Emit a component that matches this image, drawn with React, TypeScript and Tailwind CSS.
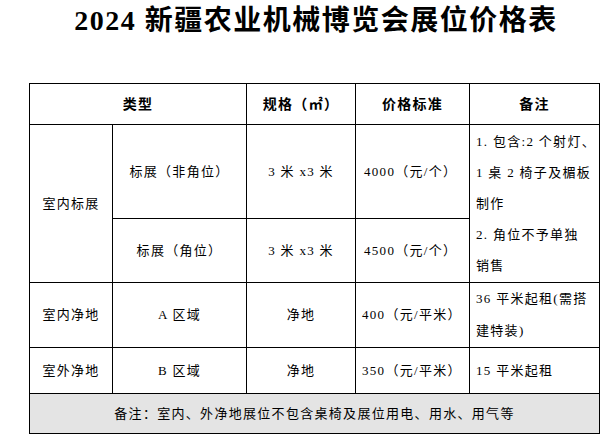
import React from "react";

const F = { fontFamily: '"Liberation Serif", "Noto Sans CJK SC", serif' };

export default function App() {
  const cell = "border border-black text-center align-middle p-0";
  return (
    <div className="w-[616px] h-[447px] bg-white text-black" style={F}>
      <div className="h-[83px] pl-[16px]">
        <div className="pt-[5px] text-center text-[28px] leading-[32px] font-bold tracking-[1.5px]">
          2024 新疆农业机械博览会展位价格表
        </div>
      </div>
      <table className="ml-[29px] w-[570px] table-fixed border-collapse text-[13px] tracking-[1.3px]">
        <colgroup>
          <col className="w-[83px]" />
          <col className="w-[134px]" />
          <col className="w-[109px]" />
          <col className="w-[114px]" />
          <col className="w-[130px]" />
        </colgroup>
        <tbody>
          <tr className="h-[41px] font-bold text-[14px]">
            <td className={cell} colSpan={2}>类型</td>
            <td className={cell}>规格（㎡）</td>
            <td className={cell}>价格标准</td>
            <td className={cell}>备注</td>
          </tr>
          <tr className="h-[94px]">
            <td className={cell} rowSpan={2}>室内标展</td>
            <td className={cell}>标展（非角位）</td>
            <td className={cell}>3 米 x3 米</td>
            <td className={cell + " !text-left pl-[8px]"}>4000（元/个）</td>
            <td className={cell + " !text-left pl-[6px] leading-[31px]"} rowSpan={2}>
              1. 包含:2 个射灯、<br />1 桌 2 椅子及楣板<br />制作<br />2. 角位不予单独<br />销售
            </td>
          </tr>
          <tr className="h-[64px]">
            <td className={cell}>标展（角位）</td>
            <td className={cell}>3 米 x3 米</td>
            <td className={cell + " !text-left pl-[8px]"}>4500（元/个）</td>
          </tr>
          <tr className="h-[63px]">
            <td className={cell}>室内净地</td>
            <td className={cell}>A 区域</td>
            <td className={cell}>净地</td>
            <td className={cell + " !text-left pl-[6px]"}>400（元/平米）</td>
            <td className={cell + " !text-left pl-[6px] leading-[32px]"}>
              36 平米起租(需搭<br />建特装)
            </td>
          </tr>
          <tr className="h-[46px]">
            <td className={cell}>室外净地</td>
            <td className={cell}>B 区域</td>
            <td className={cell}>净地</td>
            <td className={cell + " !text-left pl-[6px]"}>350（元/平米）</td>
            <td className={cell + " !text-left pl-[6px]"}>15 平米起租</td>
          </tr>
          <tr className="h-[40px] bg-[#e4e4e4]">
            <td className={cell} colSpan={5}>
              备注：室内、外净地展位不包含桌椅及展位用电、用水、用气等
            </td>
          </tr>
        </tbody>
      </table>
    </div>
  );
}
